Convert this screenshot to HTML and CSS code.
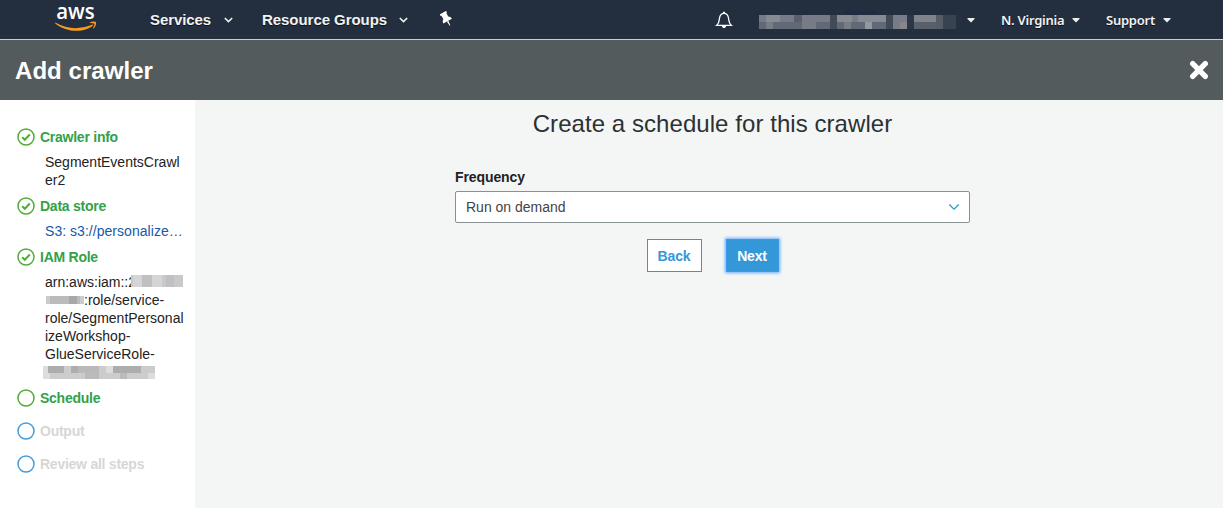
FILE: index.html
```html
<!DOCTYPE html>
<html lang="en">
<head>
<meta charset="utf-8">
<title>Add crawler</title>
<link rel="stylesheet" href="styles.css">
</head>
<body>
<header class="topnav">
  <svg class="logo" width="44" height="36" viewBox="0 0 44 36">
    <text x="1.2" y="19" textLength="38.5" lengthAdjust="spacingAndGlyphs" class="logo-word">aws</text>
    <path d="M.3 22.6Q18 32.6 36.4 25Q38.6 24 38.2 25.2C31 32.4 12 33.4 .2 23.4Z" fill="#f79a1e"/>
    <path d="M34.2 22.9Q38 20.8 41 22Q41.6 25.8 38.4 28.6Q37.8 28.6 38.2 27.6Q40 24.2 39.2 23.4Q38 22.8 34.2 22.9Z" fill="#f79a1e"/>
  </svg>
  <nav class="menu">
    <span class="main-item services"><span class="fit">Services</span><svg width="9" height="6" viewBox="0 0 9 6"><path d="M.8 1 4.5 4.5 8.2 1"/></svg></span>
    <span class="main-item groups"><span class="fit">Resource Groups</span><svg width="9" height="6" viewBox="0 0 9 6"><path d="M.8 1 4.5 4.5 8.2 1"/></svg></span>
    <svg class="pin" width="14" height="16" viewBox="0 0 14 16"><g transform="translate(6.2 7.6) rotate(-29)" fill="#fff"><path d="M-3.6-6.8H3.6V-4.8H2.8V-.8Q4.9.3 4.9 3H-4.9Q-4.9.3-2.8-.8V-4.8H-3.6Z"/><path d="M-.9 3H.9L.3 8H-.3Z"/></g></svg>
  </nav>
  <div class="account">
    <svg class="bell" width="18" height="18" viewBox="0 0 18 18"><path d="M1.8 14.3C4.5 12 4 9.5 4.6 6.6Q5.4 2.4 9 2.4T13.4 6.6C14 9.5 13.5 12 16.2 14.3Z" fill="none" stroke="#fff" stroke-width="1.3"/><path d="M8 2.4V.8H10V2.4ZM6.8 14.8H11.2Q10.8 17.2 9 17.2T6.8 14.8Z" fill="#fff"/></svg>
    <svg class="mask-user" width="204" height="18" viewBox="0 0 204 18" shape-rendering="crispEdges">
      <g transform="translate(1,0)">
      <path d="M43 0h7v4h-7zM85 0h32v4h-32zM155 0h7v4h-7z" fill="#202a41"/>
      <path d="M0 4h127v7H0z" fill="#777b87"/><path d="M7 4h14v7H7zM78 4h15v7H78zM99 4h28v7H99z" fill="#858a94"/><path d="M35 4h8v7h-8z" fill="#595f70"/>
      <path d="M0 11h127v7H0z" fill="#626976"/><path d="M7 11h7v7H7zM43 11h14v7H43zM85 11h7v7H85z" fill="#777d83"/><path d="M106 11h7v7h-7z" fill="#94979c"/><path d="M71 4h7v14h-7zM127 4h7v14h-7z" fill="#414b58"/>
      <path d="M134 4h14v14h-14z" fill="#777b8a"/><path d="M141 11h7v7h-7z" fill="#858789"/><path d="M148 4h7v14h-7z" fill="#2b3646"/><path d="M155 4h22v7h-22z" fill="#80838c"/><path d="M155 11h22v7h-22z" fill="#59606c"/><path d="M177 4h7v14h-7z" fill="#555b67"/><path d="M184 4h13v14h-13z" fill="#384350"/><path d="M197 4h5v14h-5z" fill="#26313f"/>
      </g>
    </svg>
    <i class="caret"></i>
    <span class="side-item region">N. Virginia</span><i class="caret"></i>
    <span class="side-item support">Support</span><i class="caret"></i>
  </div>
</header>
<div class="titlebar">
  <h1>Add crawler</h1>
  <svg class="close" width="20" height="20" viewBox="0 0 20 20"><path d="M3.7 3.7 16.3 16.3M16.3 3.7 3.7 16.3" stroke="#fff" stroke-width="5.4" stroke-linecap="round"/></svg>
</div>
<div class="workspace">
  <aside class="steps">
    <div class="step"><svg class="status" width="18" height="18" viewBox="0 0 18 18"><circle cx="9" cy="9" r="8"/><path d="M5.2 9.3 7.8 11.8 12.8 6.5"/></svg><span>Crawler info</span></div>
    <div class="detail">SegmentEventsCrawl<br>er2</div>
    <div class="step"><svg class="status" width="18" height="18" viewBox="0 0 18 18"><circle cx="9" cy="9" r="8"/><path d="M5.2 9.3 7.8 11.8 12.8 6.5"/></svg><span>Data store</span></div>
    <a class="detail link">S3: s3://personalize…</a>
    <div class="step"><svg class="status" width="18" height="18" viewBox="0 0 18 18"><circle cx="9" cy="9" r="8"/><path d="M5.2 9.3 7.8 11.8 12.8 6.5"/></svg><span>IAM Role</span></div>
    <div class="detail role">
      <div class="row">arn:aws:iam::2<svg class="mask-a" width="52" height="12" viewBox="0 0 52 12" shape-rendering="crispEdges"><path d="M0 0h52v12H0z" fill="#c9c9cb"/><path d="M2 0h9v12H2zM21 0h10v12H21z" fill="#d5d5d6"/><path d="M11 0h10v12H11zM35 0h8v12h-8z" fill="#c0c0c2"/></svg></div>
      <div class="row"><svg class="mask-b" width="39" height="11" viewBox="0 0 39 11" shape-rendering="crispEdges"><path d="M1 1h38v8H1z" fill="#ccc"/><path d="M5 1h30v8H5z" fill="#bbb"/><path d="M24 1h8v8h-8z" fill="#a8a8aa"/></svg>:role/service-</div>
      <div class="row">role/SegmentPersonal</div>
      <div class="row">izeWorkshop-</div>
      <div class="row">GlueServiceRole-</div>
      <div class="row"><svg class="mask-c" width="112" height="13" viewBox="0 0 112 13" shape-rendering="crispEdges"><path d="M0 0h112v13H0z" fill="#ccc"/><path d="M5 0h16v7H5zM28 0h7v7h-7zM70 0h28v7H70z" fill="#adadb0"/><path d="M35 0h21v7H35z" fill="#b9b9bc"/><path d="M0 0h5v7H0zM63 0h7v7h-7zM0 7h7v6H0zM105 7h7v6h-7z" fill="#ddd"/><path d="M42 7h14v6H42zM77 7h7v6h-7z" fill="#bbb"/></svg></div>
    </div>
    <div class="step schedule"><svg class="status" width="18" height="18" viewBox="0 0 18 18"><circle cx="9" cy="9" r="8"/></svg><span>Schedule</span></div>
    <div class="step pending"><svg class="status" width="18" height="18" viewBox="0 0 18 18"><circle cx="9" cy="9" r="8"/></svg><span>Output</span></div>
    <div class="step pending"><svg class="status" width="18" height="18" viewBox="0 0 18 18"><circle cx="9" cy="9" r="8"/></svg><span>Review all steps</span></div>
  </aside>
  <main class="content">
    <h2>Create a schedule for this crawler</h2>
    <div class="field">
      <label>Frequency</label>
      <div class="select"><span>Run on demand</span><svg width="12" height="8" viewBox="0 0 12 8"><path d="M1.2 1.5 6 6.1 10.8 1.5" fill="none" stroke="#2e98d4" stroke-width="1.3"/></svg></div>
    </div>
    <div class="actions"><button class="btn">Back</button><button class="btn primary">Next</button></div>
  </main>
</div>
</body>
</html>
```
FILE: styles.css
```css
* { box-sizing: border-box; }
body {
  margin: 0;
  height: 508px;
  display: flex;
  flex-direction: column;
  overflow: hidden;
  background: #f4f6f6;
  color: #222;
  font: 14px/18px "Liberation Sans", Arial, sans-serif;
}
.topnav {
  height: 40px;
  flex: none;
  display: flex;
  background: #232e3e;
  border-bottom: 1px solid #c9cccf;
  color: #f2f2f2;
}
.logo { margin: 0 0 0 55px; flex: none; overflow: visible; }
.logo-word { font: 600 22px/22px "Open Sans", sans-serif; fill: #fff; }
.menu { display: flex; align-items: center; margin-left: 51px; height: 39px; }
.main-item { display: flex; align-items: center; gap: 12px; font-size: 15px; font-weight: 700; text-shadow: 0 1px 0 #111; white-space: nowrap; }
.main-item svg { fill: none; stroke: #eee; stroke-width: 1.7; margin-top: 1px; }
.services { width: 112px; gap: 13px; }
.groups { width: 178px; }
.groups .fit { letter-spacing: -.05px; }
.services .fit { letter-spacing: -.1px; }
.pin { margin-top: -1px; }
.account { margin-left: auto; display: flex; align-items: center; height: 39px; padding-right: 52px; }
.bell { margin-right: 25px; }
.mask-user { margin: 0 5px 0 0; }
.caret { width: 8px; height: 5px; margin-top: 2px; background: #eee; clip-path: polygon(6% 0, 94% 0, 94% 20%, 50% 90%, 6% 20%); }
.side-item { font: 600 13px "Noto Sans", sans-serif; text-shadow: 0 1px 0 #111; white-space: nowrap; letter-spacing: -.25px; }
.region { margin: 0 8px 0 26px; width: 63px; }
.support { margin: 0 9px 0 26px; width: 48px; }
.titlebar { height: 60px; flex: none; display: flex; align-items: center; justify-content: space-between; padding: 0 14px 0 15px; background: #545b5c; color: #fff; }
h1 { margin: 2px 0 0; font-size: 24px; line-height: 28px; letter-spacing: .05px; }
.workspace { display: flex; flex: 1; min-height: 0; }
.steps { width: 195px; flex: none; padding: 28px 0 0 17px; background: #fff; }
.step { display: flex; align-items: center; height: 18px; gap: 5px; color: #33a14a; font-weight: 700; white-space: nowrap; letter-spacing: -.25px; }
.status { flex: none; fill: none; stroke: #4fad36; stroke-width: 1.5; }
.status path { stroke-width: 2; }
.detail { display: block; margin: 7px 0 8px 28px; white-space: nowrap; }
.link { color: #1858a9; letter-spacing: .04px; }
.row { height: 18px; display: flex; align-items: center; }
.mask-a { margin: -2px 0 0 -5px; }
.mask-c { margin-left: -2px; }
.pending { margin-top: 15px; color: #d5d7d7; }
.pending .status { stroke: #419fd9; }
.content { flex: 1; display: flex; flex-direction: column; align-items: center; padding: 9px 0 0 7px; }
h2 { margin: 0; font-size: 24px; line-height: 30px; font-weight: 400; letter-spacing: .06px; color: #2d3132; }
.field { width: 515px; margin-top: 29px; }
label { display: block; font-weight: 700; line-height: 18px; letter-spacing: -.1px; }
.select { display: flex; align-items: center; justify-content: space-between; height: 32px; margin-top: 5px; padding: 0 9px 0 10px; border: 1px solid #879192; border-radius: 2px; background: #fff; color: #444; }
.actions { display: flex; gap: 24px; margin-top: 16px; }
.btn { width: 55px; height: 33px; padding: 0; border: 1px solid #3498d5; background: #fff; color: #3498d8; font: 700 14px "Liberation Sans", sans-serif; letter-spacing: -.15px; }
.primary { width: 53px; border-color: #3b99ee; background: #3498d8; color: #fff; box-shadow: 0 0 3px 1px #65aaff; }
```
